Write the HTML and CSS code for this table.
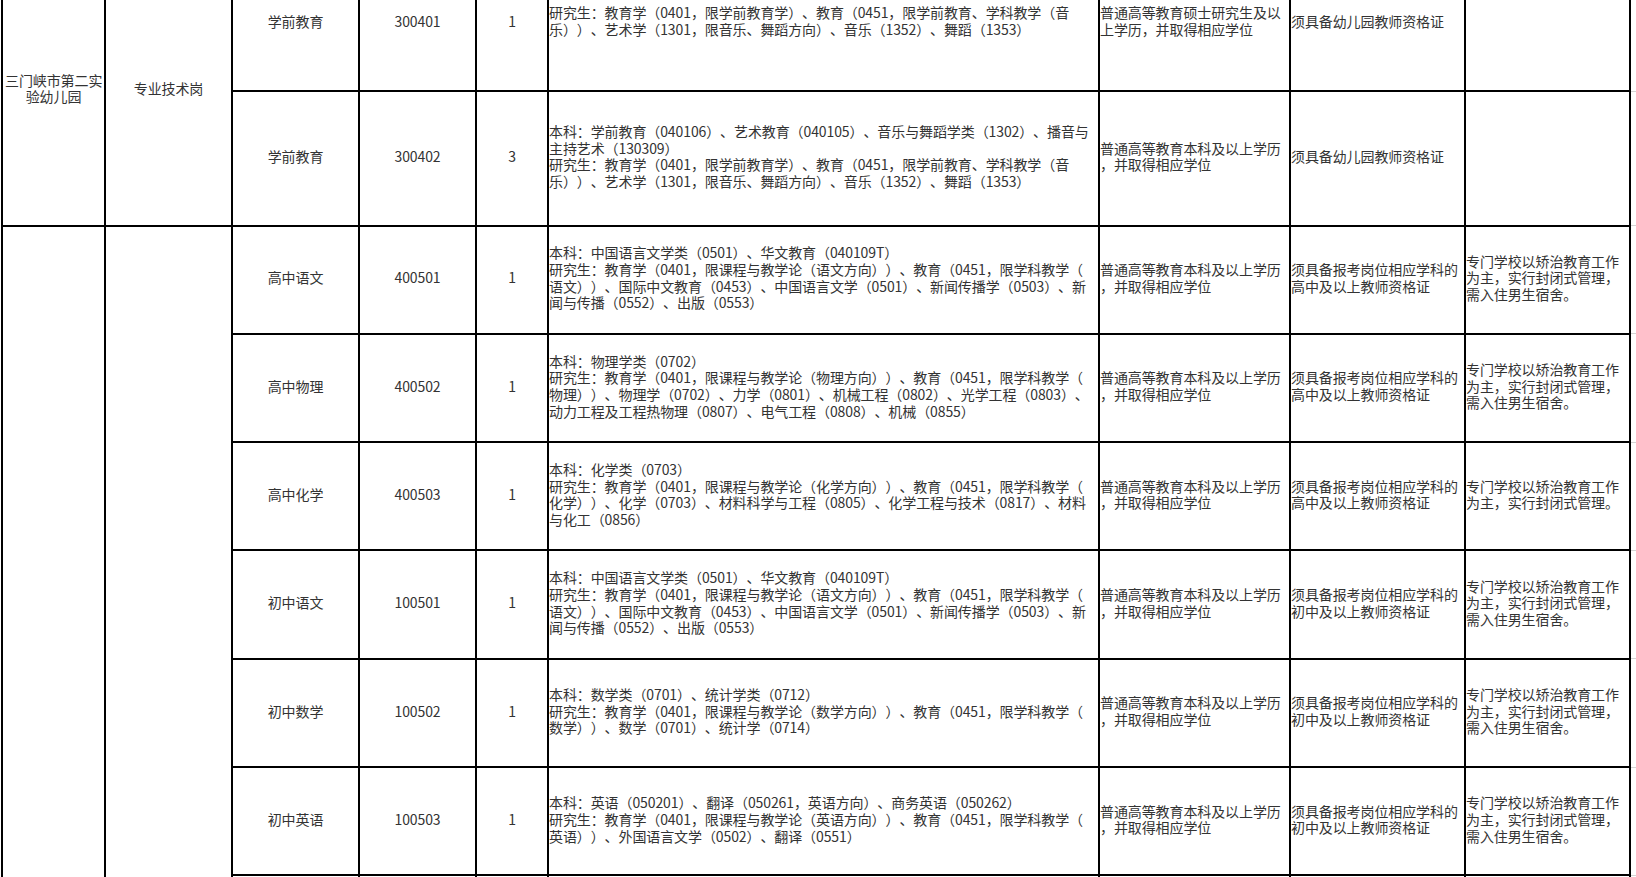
FILE: index.html
```html
<!DOCTYPE html>
<html lang="zh-CN">
<head>
<meta charset="utf-8">
<title>岗位表</title>
<link rel="stylesheet" href="styles.css">
</head>
<body>
<table class="sheet">
  <colgroup>
    <col class="w-unit"><col class="w-type"><col class="w-post"><col class="w-code"><col class="w-num"><col class="w-major"><col class="w-edu"><col class="w-cert"><col class="w-note"><col class="w-pad">
  </colgroup>
  <tbody>
    <tr class="row-tall">
      <td class="c" rowspan="2">三门峡市第二实<br>验幼儿园</td>
      <td class="c" rowspan="2">专业技术岗</td>
      <td class="c">学前教育</td>
      <td class="c">300401</td>
      <td class="c">1</td>
      <td class="l">研究生：教育学（0401，限学前教育学）、教育（0451，限学前教育、学科教学（音<br>乐））、艺术学（1301，限音乐、舞蹈方向）、音乐（1352）、舞蹈（1353）</td>
      <td class="l">普通高等教育硕士研究生及以<br>上学历，并取得相应学位</td>
      <td class="l">须具备幼儿园教师资格证</td>
      <td class="l"></td>
      <td class="pad"></td>
    </tr>
    <tr class="row-tall2">
      <td class="c">学前教育</td>
      <td class="c">300402</td>
      <td class="c">3</td>
      <td class="l">本科：学前教育（040106）、艺术教育（040105）、音乐与舞蹈学类（1302）、播音与<br>主持艺术（130309）<br>研究生：教育学（0401，限学前教育学）、教育（0451，限学前教育、学科教学（音<br>乐））、艺术学（1301，限音乐、舞蹈方向）、音乐（1352）、舞蹈（1353）</td>
      <td class="l">普通高等教育本科及以上学历<br>，并取得相应学位</td>
      <td class="l">须具备幼儿园教师资格证</td>
      <td class="l"></td>
      <td class="pad"></td>
    </tr>
    <tr class="row">
      <td class="c" rowspan="7"></td>
      <td class="c" rowspan="7"></td>
      <td class="c">高中语文</td>
      <td class="c">400501</td>
      <td class="c">1</td>
      <td class="l">本科：中国语言文学类（0501）、华文教育（040109T）<br>研究生：教育学（0401，限课程与教学论（语文方向））、教育（0451，限学科教学（<br>语文））、国际中文教育（0453）、中国语言文学（0501）、新闻传播学（0503）、新<br>闻与传播（0552）、出版（0553）</td>
      <td class="l">普通高等教育本科及以上学历<br>，并取得相应学位</td>
      <td class="l">须具备报考岗位相应学科的<br>高中及以上教师资格证</td>
      <td class="l">专门学校以矫治教育工作<br>为主，实行封闭式管理，<br>需入住男生宿舍。</td>
      <td class="pad"></td>
    </tr>
    <tr class="row">
      <td class="c">高中物理</td>
      <td class="c">400502</td>
      <td class="c">1</td>
      <td class="l">本科：物理学类（0702）<br>研究生：教育学（0401，限课程与教学论（物理方向））、教育（0451，限学科教学（<br>物理））、物理学（0702）、力学（0801）、机械工程（0802）、光学工程（0803）、<br>动力工程及工程热物理（0807）、电气工程（0808）、机械（0855）</td>
      <td class="l">普通高等教育本科及以上学历<br>，并取得相应学位</td>
      <td class="l">须具备报考岗位相应学科的<br>高中及以上教师资格证</td>
      <td class="l">专门学校以矫治教育工作<br>为主，实行封闭式管理，<br>需入住男生宿舍。</td>
      <td class="pad"></td>
    </tr>
    <tr class="row">
      <td class="c">高中化学</td>
      <td class="c">400503</td>
      <td class="c">1</td>
      <td class="l">本科：化学类（0703）<br>研究生：教育学（0401，限课程与教学论（化学方向））、教育（0451，限学科教学（<br>化学））、化学（0703）、材料科学与工程（0805）、化学工程与技术（0817）、材料<br>与化工（0856）</td>
      <td class="l">普通高等教育本科及以上学历<br>，并取得相应学位</td>
      <td class="l">须具备报考岗位相应学科的<br>高中及以上教师资格证</td>
      <td class="l">专门学校以矫治教育工作<br>为主，实行封闭式管理。</td>
      <td class="pad"></td>
    </tr>
    <tr class="row">
      <td class="c">初中语文</td>
      <td class="c">100501</td>
      <td class="c">1</td>
      <td class="l">本科：中国语言文学类（0501）、华文教育（040109T）<br>研究生：教育学（0401，限课程与教学论（语文方向））、教育（0451，限学科教学（<br>语文））、国际中文教育（0453）、中国语言文学（0501）、新闻传播学（0503）、新<br>闻与传播（0552）、出版（0553）</td>
      <td class="l">普通高等教育本科及以上学历<br>，并取得相应学位</td>
      <td class="l">须具备报考岗位相应学科的<br>初中及以上教师资格证</td>
      <td class="l">专门学校以矫治教育工作<br>为主，实行封闭式管理，<br>需入住男生宿舍。</td>
      <td class="pad"></td>
    </tr>
    <tr class="row">
      <td class="c">初中数学</td>
      <td class="c">100502</td>
      <td class="c">1</td>
      <td class="l">本科：数学类（0701）、统计学类（0712）<br>研究生：教育学（0401，限课程与教学论（数学方向））、教育（0451，限学科教学（<br>数学））、数学（0701）、统计学（0714）</td>
      <td class="l">普通高等教育本科及以上学历<br>，并取得相应学位</td>
      <td class="l">须具备报考岗位相应学科的<br>初中及以上教师资格证</td>
      <td class="l">专门学校以矫治教育工作<br>为主，实行封闭式管理，<br>需入住男生宿舍。</td>
      <td class="pad"></td>
    </tr>
    <tr class="row">
      <td class="c">初中英语</td>
      <td class="c">100503</td>
      <td class="c">1</td>
      <td class="l">本科：英语（050201）、翻译（050261，英语方向）、商务英语（050262）<br>研究生：教育学（0401，限课程与教学论（英语方向））、教育（0451，限学科教学（<br>英语））、外国语言文学（0502）、翻译（0551）</td>
      <td class="l">普通高等教育本科及以上学历<br>，并取得相应学位</td>
      <td class="l">须具备报考岗位相应学科的<br>初中及以上教师资格证</td>
      <td class="l">专门学校以矫治教育工作<br>为主，实行封闭式管理，<br>需入住男生宿舍。</td>
      <td class="pad"></td>
    </tr>
    <tr class="row">
      <td class="c"></td>
      <td class="c"></td>
      <td class="c"></td>
      <td class="l"></td>
      <td class="l"></td>
      <td class="l"></td>
      <td class="l"></td>
      <td class="pad"></td>
    </tr>
  </tbody>
</table>
</body>
</html>
```

FILE: styles.css
```css
html, body {
  margin: 0;
  padding: 0;
  background: #ffffff;
  overflow: hidden;
}

.sheet {
  border-collapse: collapse;
  table-layout: fixed;
  width: 1636px;
  margin: -46px 0 0 1px;
  font-family: "Noto Sans CJK SC", "Noto Sans", sans-serif;
  font-size: 14px;
  line-height: 16.7px;
  letter-spacing: -0.1px;
  color: #333333;
  text-spacing-trim: space-all;
  font-feature-settings: "halt" 0, "chws" 0;
}

.w-unit { width: 103px; }
.w-type { width: 127px; }
.w-post { width: 127px; }
.w-code { width: 117px; }
.w-num { width: 72px; }
.w-major { width: 551px; }
.w-edu { width: 191px; }
.w-cert { width: 175px; }
.w-note { width: 165px; }
.w-pad { width: 8px; }

.sheet td {
  border: 2px solid #000000;
  padding: 0 2px 4px 2px;
  vertical-align: middle;
  white-space: nowrap;
  overflow: hidden;
}

.row-tall { height: 136px; }
.row-tall2 { height: 134.6px; }
.row { height: 108.3px; }

.sheet td.c { text-align: center; }
.sheet td.l { text-align: left; padding-left: 0; }

.sheet td.pad {
  border-top: none;
  border-left: none;
  border-right: none;
  border-bottom: 1px solid #d4d4d4;
  padding: 0;
}
```
